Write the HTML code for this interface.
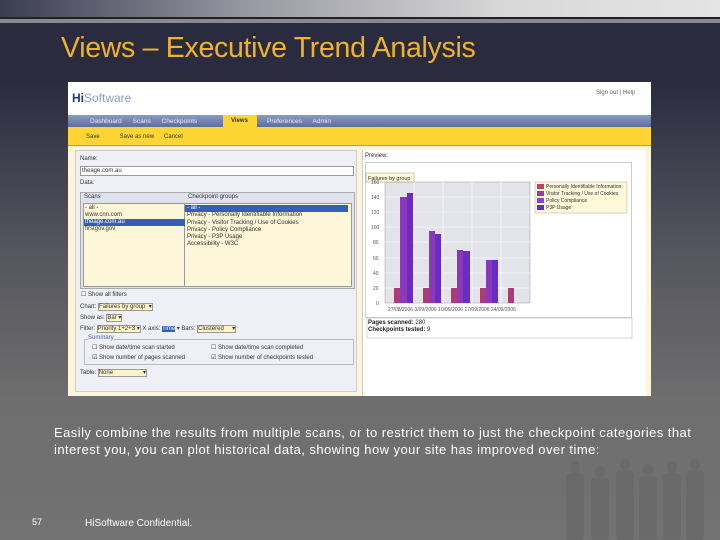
<!DOCTYPE html>
<html><head><meta charset="utf-8"><style>
*{margin:0;padding:0;box-sizing:border-box}
body{width:720px;height:540px;overflow:hidden;position:relative;font-family:"Liberation Sans",sans-serif;
background:linear-gradient(to bottom,#2b2b40 0px,#2b2b40 80px,#55555e 250px,#6e6e6e 400px,#727272 540px)}
.a{position:absolute}
.s{font-size:6px;color:#333;white-space:nowrap}
.sel{background:#fff3c8;border:1px solid #999}
</style></head><body>
<div class="a" style="left:0;top:0;width:720px;height:17px;background:linear-gradient(to right,#3a3c50,#9a9aa4 35%,#d8d8d8 70%,#e4e4e4)"></div>
<div class="a" style="left:0;top:17px;width:720px;height:2px;background:#222"></div>
<div class="a" style="left:0;top:19px;width:720px;height:4px;background:#8a8a8e"></div>
<div class="a" style="left:61px;top:32px;font-size:28.5px;color:#f0b328;letter-spacing:-0.3px">Views – Executive Trend Analysis</div>

<!-- screenshot -->
<div class="a" style="left:68px;top:82px;width:583px;height:314px;background:#fdf4dc">
 <div class="a" style="left:0;top:0;width:583px;height:33px;background:#fff"></div>
 <div class="a" style="left:4px;top:9px;font-size:12px;font-weight:bold;color:#1a3a8a">Hi<span style="font-weight:normal;color:#8aa0c8">Software</span></div>
 <div class="a s" style="left:528px;top:8px;color:#666">Sign out | Help</div>
 <div class="a" style="left:0;top:33px;width:583px;height:12px;background:linear-gradient(#8a9cc0,#5c6f98)"></div>
 <div class="a s" style="left:22px;top:36px;color:#e8ecf4;font-size:6.5px">Dashboard &nbsp;&nbsp;&nbsp;&nbsp; Scans &nbsp;&nbsp;&nbsp;&nbsp; Checkpoints</div>
 <div class="a" style="left:155px;top:33px;width:34px;height:12px;background:#fcd535"></div>
 <div class="a s" style="left:163px;top:36px;font-weight:bold">Views</div>
 <div class="a s" style="left:199px;top:36px;color:#e8ecf4;font-size:6.5px">Preferences &nbsp;&nbsp;&nbsp;&nbsp; Admin</div>
 <div class="a" style="left:0;top:45px;width:583px;height:19px;background:#fcd535;border-bottom:1px solid #c8a020"></div>
 <div class="a s" style="left:18px;top:52px">Save &nbsp;&nbsp;&nbsp;&nbsp;&nbsp;&nbsp;&nbsp;&nbsp;&nbsp;&nbsp; Save as new &nbsp;&nbsp;&nbsp;&nbsp; Cancel</div>
 <!-- left panel -->
 <div class="a" style="left:7px;top:68px;width:282px;height:242px;background:#eef0f5;border:1px solid #ccc"></div>
 <div class="a s" style="left:12px;top:74px">Name:</div>
 <div class="a" style="left:12px;top:84px;width:274px;height:10px;background:#fff;border:1px solid #999"></div>
 <div class="a s" style="left:14px;top:86px">theage.com.au</div>
 <div class="a s" style="left:12px;top:98px">Data:</div>
 <div class="a" style="left:12px;top:110px;width:275px;height:97px;background:#dde2ec;border:1px solid #aaa"></div>
 <div class="a s" style="left:16px;top:112px">Scans</div>
 <div class="a s" style="left:120px;top:112px">Checkpoint groups</div>
 <div class="a" style="left:15px;top:121px;width:103px;height:84px;background:#fef6d8;border:1px solid #999"></div>
 <div class="a" style="left:116px;top:121px;width:168px;height:84px;background:#fef6d8;border:1px solid #999"></div>
 <div class="a" style="left:16px;top:137px;width:101px;height:7px;background:#3460b8"></div>
 <div class="a" style="left:117px;top:123px;width:163px;height:7px;background:#3460b8"></div>
 <div class="a s" style="left:17px;top:123px;line-height:7px">- all -<br>www.cnn.com<br><span style="color:#fff">theage.com.au</span><br>firstgov.gov</div>
 <div class="a s" style="left:119px;top:123px;line-height:7.3px"><span style="color:#fff">- all -</span><br>Privacy - Personally Identifiable Information<br>Privacy - Visitor Tracking / Use of Cookies<br>Privacy - Policy Compliance<br>Privacy - P3P Usage<br>Accessibility - W3C</div>
 <div class="a s" style="left:13px;top:209px">☐ Show all filters</div>
 <div class="a s" style="left:12px;top:221px">Chart: <span class="sel">Failures by group &nbsp;▾</span></div>
 <div class="a s" style="left:12px;top:232px">Show as: <span class="sel">Bar ▾</span></div>
 <div class="a s" style="left:12px;top:243px">Filter: <span class="sel">Priority 1+2+3 ▾</span> X axis: <span style="background:#3460b8;color:#fff">Time</span> ▾ Bars: <span class="sel">Clustered &nbsp;&nbsp;&nbsp;&nbsp;▾</span></div>
 <div class="a" style="left:16px;top:257px;width:270px;height:26px;border:1px solid #bbb"></div>
 <div class="a s" style="left:20px;top:253px;color:#5060a0;background:#eef0f5">Summary</div>
 <div class="a s" style="left:24px;top:261px;line-height:10px">☐ Show date/time scan started<br>☑ Show number of pages scanned</div>
 <div class="a s" style="left:143px;top:261px;line-height:10px">☐ Show date/time scan completed<br>☑ Show number of checkpoints tested</div>
 <div class="a s" style="left:12px;top:287px">Table: <span class="sel">None &nbsp;&nbsp;&nbsp;&nbsp;&nbsp;&nbsp;&nbsp;&nbsp;&nbsp;&nbsp;&nbsp;&nbsp;&nbsp;&nbsp;&nbsp;&nbsp;&nbsp;▾</span></div>
 <!-- right -->
 <div class="a" style="left:294px;top:68px;width:284px;height:246px;background:#fff;border-left:1px solid #ccc"></div>
 <div class="a s" style="left:297px;top:71px">Preview:</div>
 <div class="a" style="left:297px;top:80px;width:267px;height:156px;background:#fff;border:1px solid #ccc"></div>
 <svg class="a" style="left:0;top:0" width="583" height="314">
  <rect x="317" y="100" width="145" height="121" fill="#e2e4ea" stroke="#999" stroke-width="0.5"/>
  <g stroke="#fff" stroke-width="0.6">
   <line x1="317" y1="115" x2="462" y2="115"/><line x1="317" y1="130" x2="462" y2="130"/><line x1="317" y1="145" x2="462" y2="145"/><line x1="317" y1="160" x2="462" y2="160"/><line x1="317" y1="176" x2="462" y2="176"/><line x1="317" y1="191" x2="462" y2="191"/><line x1="317" y1="206" x2="462" y2="206"/>
   <line x1="346" y1="100" x2="346" y2="221"/><line x1="375" y1="100" x2="375" y2="221"/><line x1="404" y1="100" x2="404" y2="221"/><line x1="433" y1="100" x2="433" y2="221"/>
  </g>
  <rect x="298" y="91" width="48" height="9" fill="#fff8d8" stroke="#999" stroke-width="0.5"/>
  <text x="300" y="98" font-size="5.5" fill="#333" font-family="Liberation Sans">Failures by group</text>
  <g font-size="5" fill="#555" font-family="Liberation Sans">
   <text x="303" y="102">160</text><text x="303" y="117">140</text><text x="303" y="132">120</text><text x="303" y="147">100</text><text x="305" y="162">80</text><text x="305" y="178">60</text><text x="305" y="193">40</text><text x="305" y="208">20</text><text x="308" y="223">0</text>
   <text x="320" y="229">27/08/2006 3/09/2006 10/09/2006 17/09/2006 24/09/2006</text>
  </g>
  <g fill="#b03a78"><rect x="326" y="206" width="6" height="15"/><rect x="355" y="206" width="6" height="15"/><rect x="383" y="206" width="6" height="15"/><rect x="412" y="206" width="6" height="15"/><rect x="440" y="206" width="6" height="15"/></g>
  <g fill="#8a3ab8"><rect x="332" y="115" width="7" height="106"/><rect x="361" y="149" width="6" height="72"/><rect x="389" y="168" width="6" height="53"/><rect x="418" y="178" width="6" height="43"/></g>
  <g fill="#6a2cc8"><rect x="339" y="111" width="6" height="110"/><rect x="367" y="152" width="6" height="69"/><rect x="395" y="169" width="7" height="52"/><rect x="424" y="178" width="6" height="43"/></g>
  <rect x="467" y="100" width="92" height="31" fill="#fff8d8" stroke="#aaa" stroke-width="0.5"/>
  <rect x="469" y="102" width="7" height="5" fill="#c04070"/><rect x="469" y="109" width="7" height="5" fill="#a03c88"/><rect x="469" y="116" width="7" height="5" fill="#9040c0"/><rect x="469" y="123" width="7" height="5" fill="#5830c8"/>
  <g font-size="5" fill="#333" font-family="Liberation Sans"><text x="478" y="106">Personally Identifiable Information</text><text x="478" y="113">Visitor Tracking / Use of Cookies</text><text x="478" y="120">Policy Compliance</text><text x="478" y="127">P3P Usage</text></g>
  <rect x="299" y="236" width="265" height="20" fill="#fff" stroke="#bbb" stroke-width="0.6"/>
 </svg>
 <div class="a" style="left:300px;top:238px;font-size:6px;font-weight:bold;color:#222;line-height:7px">Pages scanned: <span style="font-weight:normal">280</span><br>Checkpoints tested: <span style="font-weight:normal">9</span></div>
</div>

<svg class="a" style="left:550px;top:455px" width="170" height="85"><g fill="#6a6a6a">
<ellipse cx="25" cy="12" rx="5" ry="6"/><rect x="16" y="18" width="18" height="67" rx="4"/>
<ellipse cx="50" cy="17" rx="5" ry="6"/><rect x="41" y="23" width="18" height="62" rx="4"/>
<ellipse cx="75" cy="10" rx="5" ry="6"/><rect x="66" y="16" width="18" height="69" rx="4"/>
<ellipse cx="98" cy="15" rx="5" ry="6"/><rect x="89" y="21" width="18" height="64" rx="4"/>
<ellipse cx="122" cy="12" rx="5" ry="6"/><rect x="113" y="18" width="18" height="67" rx="4"/>
<ellipse cx="145" cy="10" rx="5" ry="6"/><rect x="136" y="16" width="18" height="69" rx="4"/>
</g></svg>
<div class="a" style="left:54px;top:424px;font-size:13px;color:#fff;line-height:17px;letter-spacing:0.45px;white-space:nowrap">Easily combine the results from multiple scans, or to restrict them to just the checkpoint categories that<br>interest you, you can plot historical data, showing how your site has improved over time:</div>
<div class="a" style="left:32px;top:517px;font-size:9px;color:#fff">57</div>
<div class="a" style="left:85px;top:518px;font-size:10px;color:#fff">HiSoftware Confidential.</div>
</body></html>
